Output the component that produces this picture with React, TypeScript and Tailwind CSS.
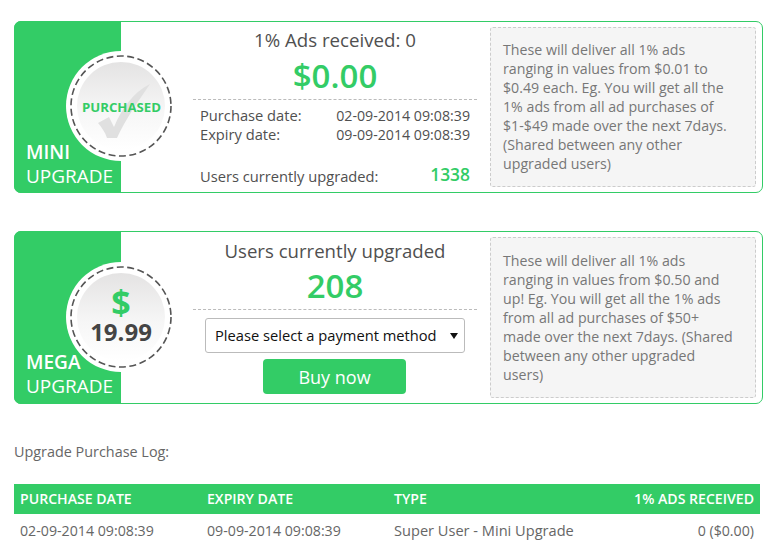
function Badge({ top, children }: { top: string; children: React.ReactNode }) {
  return (
    <div className={`absolute left-[52px] ${top} w-[110px] h-[110px] rounded-full bg-white flex items-center justify-center`}>
      <div className="absolute left-[4px] top-[4px] w-[102px] h-[102px]">
        <svg width="102" height="102" viewBox="0 0 102 102">
          <circle cx="51" cy="51" r="50" fill="none" stroke="#555" strokeWidth="1.6" strokeDasharray="7 3.5" />
        </svg>
      </div>
      <div className="relative w-[88px] h-[88px] rounded-full bg-[linear-gradient(180deg,#e4e3e3,#f6f6f6_55%,#ffffff)] flex flex-col items-center justify-center">
        {children}
      </div>
    </div>
  );
}

function Desc({ text, first }: { text: string; first: boolean }) {
  return (
    <div className={`w-[266px] ml-[13px] my-[5px] rounded-[3px] border border-dashed border-[#cccccc] bg-[#f5f5f5] pl-[12px] pr-[18px] ${first ? "py-[12px]" : "py-[13px]"} text-[14.2px] leading-[19px] text-[#777777]`}>
      {text}
    </div>
  );
}

function Label({ a, b, bottom }: { a: string; b: string; bottom: string }) {
  return (
    <div className={`absolute left-[12px] ${bottom} text-white text-[19px] leading-[24px]`}>
      <div className="font-semibold">{a}</div>
      <div>{b}</div>
    </div>
  );
}

export default function App() {
  return (
    <div className="w-[773px] h-[545px] overflow-hidden bg-white font-['Open_Sans',sans-serif] text-[#505050] pt-[21px] pl-[14px]">
      <div className="w-[749px] h-[172px] flex rounded-[7px] border border-[#33cc66]">
        <div className="relative w-[107px] -my-px -ml-px shrink-0 rounded-l-[7px] bg-[#33cc66]">
          <Badge top="top-[30px]">
            <svg className="absolute left-[20px] top-[20px]" width="56" height="58" viewBox="0 0 56 58">
              <path d="M1 41 L12 35 L17 45 C24 28 36 10 53 2 C42 18 28 38 20 56 L10 56 C8 50 5 46 1 41Z" fill="#e0e0e0" />
            </svg>
            <span className="relative mt-[4px] ml-[1px] text-[13.2px] font-bold text-[#33cc66]">PURCHASED</span>
          </Badge>
          <Label a="MINI" b="UPGRADE" bottom="bottom-[5px]" />
        </div>
        <div className="w-[284px] ml-[72px] shrink-0 flex flex-col">
          <div className="text-center text-[18.7px] leading-[24px] mt-[6px] font-medium">1% Ads received: 0</div>
          <div className="text-center text-[33px] leading-[44px] mt-[2px] font-semibold text-[#33cc66]">$0.00</div>
          <div className="border-t border-dashed border-[#bbbbbb] mt-[1px] pt-[6px] px-[7px] text-[14.2px] leading-[19px]">
            <div className="flex justify-between"><span className="text-[14.7px]">Purchase date:</span><span>02-09-2014 09:08:39</span></div>
            <div className="flex justify-between"><span className="text-[14.7px]">Expiry date:</span><span>09-09-2014 09:08:39</span></div>
          </div>
          <div className="flex justify-between items-center px-[7px] mt-[20px] text-[14.7px] leading-[24px]">
            <span>Users currently upgraded:</span>
            <span className="text-[17.4px] font-semibold text-[#33cc66] -mt-[5px]">1338</span>
          </div>
        </div>
        <Desc first text="These will deliver all 1% ads ranging in values from $0.01 to $0.49 each. Eg. You will get all the 1% ads from all ad purchases of $1-$49 made over the next 7days. (Shared between any other upgraded users)" />
      </div>

      <div className="w-[749px] h-[173px] mt-[38px] flex rounded-[7px] border border-[#33cc66]">
        <div className="relative w-[107px] -my-px -ml-px shrink-0 rounded-l-[7px] bg-[#33cc66]">
          <Badge top="top-[31px]">
            <span className="text-[34px] leading-[34px] font-bold text-[#33cc66]">$</span>
            <span className="text-[24px] leading-[26px] mb-[4px] font-bold text-[#444444]">19.99</span>
          </Badge>
          <Label a="MEGA" b="UPGRADE" bottom="bottom-[6px]" />
        </div>
        <div className="w-[284px] ml-[72px] shrink-0 flex flex-col items-center">
          <div className="text-[18.6px] leading-[24px] mt-[7px] font-medium">Users currently upgraded</div>
          <div className="text-[33px] leading-[45px] font-semibold text-[#33cc66]">208</div>
          <div className="w-full border-t border-dashed border-[#bbbbbb] mt-[1px]" />
          <div className="w-[260px] h-[35px] mt-[8px] rounded-[3px] border border-[#bbbbbb] pl-[9px] pr-[6px] flex items-center justify-between text-[14.7px] text-[#111111]">
            <span>Please select a payment method</span>
            <svg width="8" height="6" viewBox="0 0 8 6"><path d="M0 0H8L4 6Z" fill="#111" /></svg>
          </div>
          <button className="w-[143px] h-[35px] mt-[6px] -ml-[1px] pt-[1px] rounded-[4px] bg-[#33cc66] text-white text-[18px]">Buy now</button>
        </div>
        <Desc first={false} text="These will deliver all 1% ads ranging in values from $0.50 and up! Eg. You will get all the 1% ads from all ad purchases of $50+ made over the next 7days. (Shared between any other upgraded users)" />
      </div>

      <div className="mt-[38px] text-[14.4px] leading-[20px] text-[#666666]">Upgrade Purchase Log:</div>

      <div className="w-[746px] mt-[22px] text-[14.2px]">
        <div className="h-[30px] flex items-center bg-[#33cc66] px-[6px] text-white font-semibold text-[14.1px]">
          <div className="w-[187px]">PURCHASE DATE</div>
          <div className="w-[187px]">EXPIRY DATE</div>
          <div className="flex-1">TYPE</div>
          <div>1% ADS RECEIVED</div>
        </div>
        <div className="h-[33px] flex items-center px-[6px] text-[#666666]">
          <div className="w-[187px]">02-09-2014 09:08:39</div>
          <div className="w-[187px]">09-09-2014 09:08:39</div>
          <div className="flex-1 text-[14.6px]">Super User - Mini Upgrade</div>
          <div>0 ($0.00)</div>
        </div>
      </div>
    </div>
  );
}
